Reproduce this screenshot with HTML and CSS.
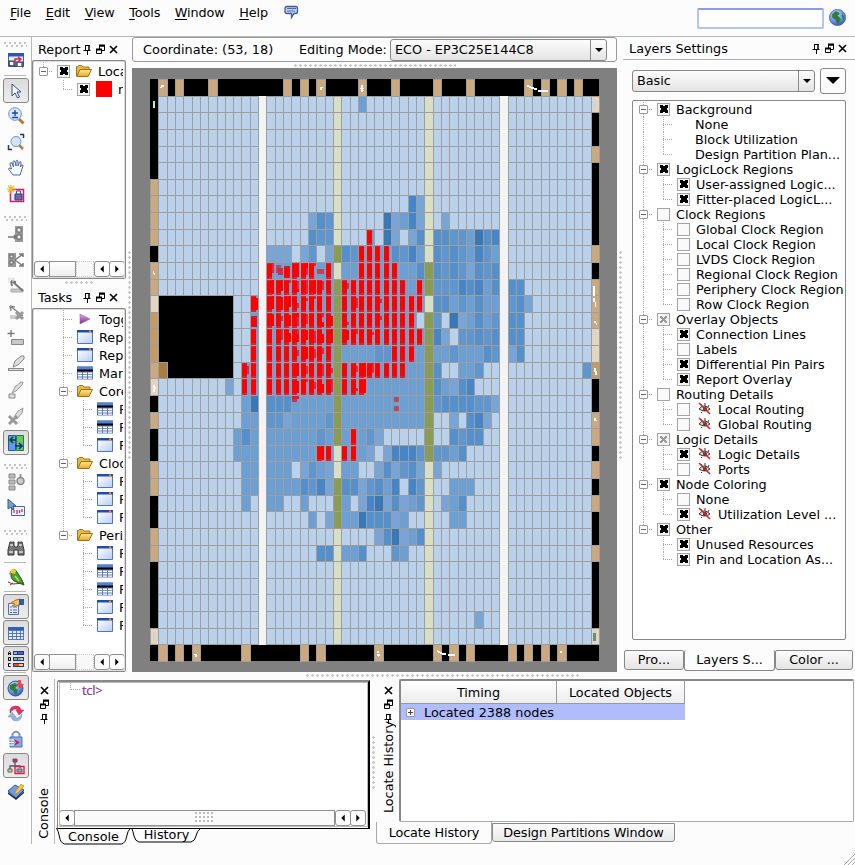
FILE: index.html
```html
<!DOCTYPE html>
<html lang="en">
<head>
<meta charset="utf-8">
<title>Chip Planner</title>
<link rel="stylesheet" href="styles.css">
</head>
<body>
<svg class="defs" width="0" height="0">
  <defs>
    <linearGradient id="gWin" x1="0" y1="0" x2="1" y2="1"><stop offset="0" stop-color="#fff"/><stop offset="1" stop-color="#b9cdf3"/></linearGradient>
    <linearGradient id="gFold" x1="0" y1="0" x2="0" y2="1"><stop offset="0" stop-color="#ffe896"/><stop offset="1" stop-color="#e8a828"/></linearGradient>
    <radialGradient id="gGlobe" cx=".4" cy=".3" r=".8"><stop offset="0" stop-color="#c4dcff"/><stop offset=".6" stop-color="#5f8fe0"/><stop offset="1" stop-color="#2347a0"/></radialGradient>
    <linearGradient id="gPurple" x1="0" y1="0" x2="0" y2="1"><stop offset="0" stop-color="#e0b0f0"/><stop offset="1" stop-color="#7a2090"/></linearGradient>
  </defs>
  <symbol id="pin" viewBox="0 0 11 11"><path d="M3.500 1v5.500M3 1.500h5M1.500 6.500h7M5.500 7v4" fill="none" stroke="#000"/><path d="M7 1v5.500" stroke="#000" stroke-width="1.500"/></symbol>
  <symbol id="float" viewBox="0 0 11 11"><path d="M4.500 5V2h5v4.500H7M1.500 5.500h5v4h-5z" fill="none" stroke="#000"/><path d="M4 1.500h6M1 5.500h6" stroke="#000" stroke-width="2"/></symbol>
  <symbol id="close" viewBox="0 0 11 11"><path d="M2 2l7 7M9 2L2 9" stroke="#000" stroke-width="1.600"/></symbol>
  <symbol id="folder" viewBox="0 0 16 14"><path d="M.5 12V2.500h1l1-1h3l1.500 1.500h6V5" fill="#e8b848" stroke="#a07818"/><path d="M.7 12.500L4 5.500h11.500L12 12.500z" fill="url(#gFold)" stroke="#a07010"/></symbol>
  <symbol id="window" viewBox="0 0 16 14"><path d="M.5 1.500h15v12H.5z" fill="url(#gWin)" stroke="#5078b8"/><path d="M0 0h16v2.500H0z" fill="#1c4cb0"/><path d="M12 .5h2V3h-2z" fill="#ff8a10"/></symbol>
  <symbol id="table" viewBox="0 0 16 13"><path d="M0 0h16v13H0z" fill="#5c7cb0"/><path d="M0 0h16v3H0z" fill="#5080e0"/><path d="M0 3h16v2H0z" fill="#000"/><path d="M1 6h4v1.700H1zM6 6h4v1.700H6zM11 6h4v1.700h-4zM1 8.500h4v1.500H1zM6 8.500h4v1.500H6zM11 8.500h4v1.500h-4zM1 11h4v1.300H1zM6 11h4v1.300H6zM11 11h4v1.300h-4z" fill="#fff"/></symbol>
  <symbol id="play" viewBox="0 0 16 14"><path d="M3 2l10 5-10 5z" fill="url(#gPurple)" stroke="#8a6a9a" stroke-width=".6"/></symbol>
  <symbol id="red" viewBox="0 0 16 16"><path d="M0 0h16v16H0z" fill="#f00"/></symbol>
  <symbol id="eye" viewBox="0 0 15 14"><path d="M2 7q5-6 11 0q-5 4-11 0M5 4L4 2M8 4V1M11 5l1-2M5 10l-1 1" fill="#ddd" stroke="#333"/><circle cx="8" cy="7" r="2" fill="#333"/><path d="M2 1l11 11" stroke="#e02020" stroke-width="1.600"/></symbol>
  <symbol id="globe" viewBox="0 0 16 16"><circle cx="8" cy="8" r="7.600" fill="url(#gGlobe)" stroke="#4a66b0" stroke-width=".8"/><path d="M3 5l3-3 3 1 1 2-2 1 2 2 1 2-2 4-2-1-1-3-3-2zM13 4l1 3v4l-1-2-1-3z" fill="#2e7d3c"/></symbol>
  <symbol id="left" viewBox="0 0 15 16"><path d="M9.500 4v8l-4-4z"/></symbol>
  <symbol id="right" viewBox="0 0 15 16"><path d="M5.500 4v8l4-4z"/></symbol>
  <symbol id="chat" viewBox="0 0 16 16"><path d="M4 2.500h9q1.500 0 1.500 2v3q0 2-2 2h-1.500l-2.500 4V9.500H4q-2 0-2-2v-3q0-2 2-2z" fill="#c0d4f0" stroke="#3e5c94" stroke-width="1.300"/><path d="M4 4.500h9M4 7h8" stroke="#4a68a4"/></symbol>

  <symbol id="t-export" viewBox="0 0 18 18"><path d="M1.500 1.500h15v13h-15z" fill="#e4edfb" stroke="#3b62b4"/><path d="M1 1h16v3.500H1z" fill="#2b58b8"/><path d="M2 9h6v5H2zM9 10h7v5H9z" fill="#7884a0" stroke="#333c60"/><path d="M3 10h3v3H3zM11 11h3v3h-3zM8 15h7v2H8z" fill="#fff"/><path d="M8 10V7h5M11 5l3 2-3 3" fill="none" stroke="#e0204c" stroke-width="1.500"/></symbol>
  <symbol id="t-arrow" viewBox="0 0 18 18"><path d="M5 2v12l3-3 2.500 5 2-1-2.500-5h4z" fill="#f1f6ff" stroke="#34507c"/></symbol>
  <symbol id="t-zoom" viewBox="0 0 18 18"><path d="M12 12l4.500 4.500" stroke="#b87830" stroke-width="3"/><circle cx="8" cy="7" r="6.300" fill="#d7e9ff" stroke="#6b92c8"/><path d="M5 6h6M8 3v6M5 10.500h6" stroke="#2144a8" stroke-width="1.400"/></symbol>
  <symbol id="t-fit" viewBox="0 0 18 18"><path d="M12 12l4 4" stroke="#b87830" stroke-width="2.500"/><circle cx="9" cy="8.500" r="5" fill="#cfe5fc" stroke="#6b92c8"/><path d="M13 1.500h3.500V5M1.500 12v4.500H5" fill="none" stroke="#203a60" stroke-width="1.500"/></symbol>
  <symbol id="t-hand" viewBox="0 0 18 18"><path d="M6 16L1.500 10q0-2 3 0L3 5q0-2 2-1l1.500 4L6 2.500q1-1.500 2 0L9 7V2q1.500-1.500 2 0v5l1.500-4q2-1 1.500 1l-.5 4 1-2q2-.5 1.500 1L14 13l-1 3z" fill="#f4f8ff" stroke="#4e6ca4"/></symbol>
  <symbol id="t-region" viewBox="0 0 18 18"><path d="M3.500 4.500h13v12h-13z" fill="#eef" stroke="#d02060" stroke-width="1.500"/><path d="M8 9h7v6H8z" fill="#5878c0" stroke="#203878"/><path d="M9.500 9V6h4v3" fill="none" stroke="#3858a0"/><path d="M9 12h5" stroke="#e03050"/><path d="M4 0v9M0 4h9M1 1l6 6M7 1L1 7" stroke="#f0b820" stroke-width="1.200"/></symbol>
  <symbol id="t-in" viewBox="0 0 18 18"><path d="M8 1h8v16H8z" fill="#999"/><path d="M10 3h4v4h-4zM10 10h4v4h-4z" fill="#eee" stroke="#666"/><path d="M1 12h8M7 10l2 2-2 2" stroke="#777" fill="none" stroke-width="1.500"/></symbol>
  <symbol id="t-out" viewBox="0 0 18 18"><path d="M1 2h8v14H1z" fill="#999"/><path d="M3 4h3v3H3zM3 10h3v3H3z" fill="#eee" stroke="#666"/><path d="M8 9l8-6M8 9l8 6M12 3h4v3M12 15h4v-3" stroke="#777" fill="none" stroke-width="1.500"/></symbol>
  <symbol id="t-fan" viewBox="0 0 18 18"><path d="M4 12h12v3H4z" fill="#c8c8c8" stroke="#aaa"/><path d="M5 4l11 10M4 4l5 1M4 4l1 5" stroke="#777" stroke-width="1.800"/><path d="M1 2h7M2 0v6M6 0v5" stroke="#ddd"/></symbol>
  <symbol id="t-del" viewBox="0 0 18 18"><path d="M3 12h12v4H3z" fill="#ccc"/><path d="M3 3l13 10M3 3l5 1M3 3l1 5" stroke="#888" stroke-width="1.500"/><path d="M9 9l7 7M16 9l-7 7" stroke="#999" stroke-width="3"/></symbol>
  <symbol id="t-add" viewBox="0 0 18 18"><path d="M4 1v7M.5 4.500h7" stroke="#777" stroke-width="1.300"/><path d="M4.500 10.500h12v5h-12z" fill="#c8c8c8" stroke="#888"/></symbol>
  <symbol id="t-pen1" viewBox="0 0 18 18"><path d="M1 14.500h16" stroke="#888" stroke-width="3"/><path d="M2 14.500h14" stroke="#ddd"/><path d="M6 12l2-6 6-5h3v3l-6 6z" fill="#ddd" stroke="#888"/></symbol>
  <symbol id="t-pen2" viewBox="0 0 18 18"><path d="M2 13h6v4H2z" fill="#ddd" stroke="#888"/><path d="M5 12l3-6 6-5h2l-1 3-6 6z" fill="#ddd" stroke="#999"/></symbol>
  <symbol id="t-pen3" viewBox="0 0 18 18"><path d="M7 10l4-6 5-3-1 5-5 6z" fill="#ddd" stroke="#999"/><path d="M2 9l8 8M10 9l-8 8" stroke="#999" stroke-width="3"/></symbol>
  <symbol id="t-swap" viewBox="0 0 18 18"><path d="M1.500 1.500h7v15h-7z" fill="#5e9be8" stroke="#2656a8"/><path d="M9.500 1.500h7v15h-7z" fill="#6bc465" stroke="#2a7a3a"/><path d="M3 6h6M6 3L3 6l3 3" fill="none" stroke="#0a4a1a" stroke-width="1.700"/><path d="M8 12h7M12 9l3 3-3 3" fill="none" stroke="#122a90" stroke-width="1.700"/></symbol>
  <symbol id="t-nodes" viewBox="0 0 18 18"><path d="M2 1h6v4H2zM2 7h6v4H2zM2 13h6v4H2z" fill="#bbb" stroke="#888"/><path d="M13.500 4v-3" stroke="#999" stroke-width="2"/><circle cx="13.500" cy="8" r="3.500" fill="#ccc" stroke="#888" stroke-width="1.500"/></symbol>
  <symbol id="t-chart" viewBox="0 0 18 18"><path d="M4.500 7.500h13v9h-13z" fill="#eef4ff" stroke="#4868b0"/><path d="M7 14v-3M10 15v-4M12.500 14v-3M15 13v-3" stroke="#e02858" stroke-width="1.300"/><path d="M1 0v10l3-2 2 3 1-1-1-3h3z" fill="#7a9ed0" stroke="#34588c"/></symbol>
  <symbol id="t-bino" viewBox="0 0 18 18"><path d="M3 3h4v4l1 1h2l1-1V3h4l2 8v5h-6v-5H7v5H1v-5z" fill="#777" stroke="#333"/><path d="M4 2h2M12 2h2M3 6h3M12 6h3M2 13h4M12 13h4" stroke="#ddd" stroke-width="1.500"/></symbol>
  <symbol id="t-bird" viewBox="0 0 18 18"><path d="M4 3q3-4 6 1l5 8 2 5-5-2-5-2q-4-3-3-7z" fill="#48a038" stroke="#205c20"/><path d="M4 2q3-3 5 1l-1 3-4-1z" fill="#f4c830"/><path d="M3 4l-1 2 2 1z" fill="#e06020"/><path d="M8 8l4 5" stroke="#bce050" stroke-width="1.500"/><path d="M1 14l5 2 11-1M3 17l3-2" stroke="#684020" fill="none"/></symbol>
  <symbol id="t-prop" viewBox="0 0 18 18"><path d="M1.500 5.500h10v11h-10z" fill="#e8f0ff" stroke="#4a70b8"/><path d="M3 9h2M3 12h2M3 14.500h2M6 9h4M6 12h4M6 14.500h4" stroke="#3c64b0"/><path d="M4 5l5-3 4-1v6l-5 1H5l3-2z" fill="#f5c060" stroke="#b07018"/><path d="M12 1h5v6h-5z" fill="#2c58b0"/></symbol>
  <symbol id="t-grid" viewBox="0 0 18 18"><path d="M1 3h16v13H1z" fill="#5278b8"/><path d="M1 3h16v3H1z" fill="#3060b8"/><path d="M2 7h3v2H2zM6 7h3v2H6zM10 7h3v2h-3zM14 7h2v2h-2zM2 10h3v2H2zM6 10h3v2H6zM10 10h3v2h-3zM14 10h2v2h-2zM2 13h3v2H2zM6 13h3v2H6zM10 13h3v2h-3zM14 13h2v2h-2z" fill="#e8f0ff"/></symbol>
  <symbol id="t-abc" viewBox="0 0 18 18"><path d="M1.500 5V2.500l1-1 1 1V5M1.500 3.500h2M1.500 7.500v3h2v-3h-2M3.500 13.500h-2v3h2" stroke="#000" fill="none"/><path d="M6 1h11v4H6zM6 7h11v4H6zM6 13h11v4H6z" fill="#223a78"/><path d="M7 2h3v2H7z" fill="#8aaef8"/><path d="M11 2h5v2h-5z" fill="#4068d0"/><path d="M7 8h3v2H7z" fill="#70c850"/><path d="M11 8h3v2h-3z" fill="#c090f0"/><path d="M14 8h2v2h-2zM12 14h4v2h-4z" fill="#f0e050"/><path d="M7 14h5v2H7z" fill="#f04838"/></symbol>
  <symbol id="t-globe" viewBox="0 0 18 18"><circle cx="8.500" cy="9.500" r="7.500" fill="url(#gGlobe)" stroke="#3454a0"/><path d="M3 6l5-2 3 2-3 3 3 2-2 5-3-4-3-2z" fill="#2e7d3c"/><path d="M11 1h3v4h3l-4 5-4-5h2z" fill="#f04848"/></symbol>
  <symbol id="t-sync" viewBox="0 0 18 18"><path d="M3 9q-1-7 6-7 4 0 5 4h3l-5 5-3-5h2q-4-3-8 3z" fill="#e8305c" stroke="#b02848" stroke-width=".5"/><path d="M15 10q0 7-6 7-4 0-5-4H1l4-5 4 5H7q4 3 8-3z" fill="#9ab4dc" stroke="#7890b8" stroke-width=".5"/></symbol>
  <symbol id="t-lock" viewBox="0 0 18 18"><path d="M5.500 8V4q3.500-5 7 0v4" fill="none" stroke="#8098b8" stroke-width="2"/><path d="M3 7h12v10H3z" fill="#88aee0" stroke="#4870b0"/><path d="M1 10h6M2 12.500h5M1 15h6" stroke="#fff"/><path d="M7 9l6 3.500-6 3.500 2-3.500z" fill="#d81848"/></symbol>
  <symbol id="t-hier" viewBox="0 0 18 18"><path d="M8 5v4M3 12V9h10v2" fill="none" stroke="#405880" stroke-width="1.300"/><path d="M6 2h4v3H6z" fill="#e02848" stroke="#505870"/><path d="M1 12h4v3H1z" fill="#e8e050" stroke="#505870"/><path d="M10 12h5v3h-5z" fill="#78c0a0" stroke="#505870"/><path d="M8 9.500h9v7H8z" fill="none" stroke="#f01848" stroke-width="1.400"/></symbol>
  <symbol id="t-chip" viewBox="0 0 18 18"><path d="M1 9l7-6 9 5-8 8z" fill="#6f9ee0" stroke="#305090"/><path d="M1 10l8 6v2l-8-6zM9 16l8-7v2l-8 7z" fill="#203050"/><path d="M8 10l6-8 3 2-6 7-3 1z" fill="#f8c838" stroke="#b07018" stroke-width=".6"/></symbol>
</svg>

<header class="menubar">
  <nav class="menu">
    <span><u>F</u>ile</span><span><u>E</u>dit</span><span><u>V</u>iew</span><span><u>T</u>ools</span><span><u>W</u>indow</span><span><u>H</u>elp</span>
    <svg class="chat"><use href="#chat"/></svg>
  </nav>
  <div class="search"><input type="text" aria-label="Search"><svg class="globe"><use href="#globe"/></svg></div>
</header>

<div class="workspace">
  <aside class="toolbar" id="toolbar"></aside>
  <div class="body">
    <div class="upper">
      <div class="docks">
        <section class="dock report">
          <div class="title"><span>Report</span><svg><use href="#pin"/></svg><svg><use href="#float"/></svg><svg><use href="#close"/></svg></div>
          <div class="frame"><div class="tree" id="report"></div>
            <div class="scroll"><b><svg><use href="#left"/></svg></b><i></i><em></em><b><svg><use href="#left"/></svg></b><b><svg><use href="#right"/></svg></b></div>
          </div>
        </section>
        <div class="hsplit"><i></i></div>
        <section class="dock tasks">
          <div class="title"><span>Tasks</span><svg><use href="#pin"/></svg><svg><use href="#float"/></svg><svg><use href="#close"/></svg></div>
          <div class="frame"><div class="tree" id="tasks"></div>
            <div class="scroll"><b><svg><use href="#left"/></svg></b><i></i><em></em><b><svg><use href="#left"/></svg></b><b><svg><use href="#right"/></svg></b></div>
          </div>
        </section>
      </div>
      <div class="vsplit"><i></i></div>
      <main class="center">
        <div class="coords"><span class="coord">Coordinate: (53, 18)</span><span class="mode">Editing Mode:</span>
          <div class="combo"><span>ECO - EP3C25E144C8</span><b></b></div></div>
        <div class="hsplit wide"><i></i></div>
        <svg class="chip" id="chip" width="485" height="604" viewBox="132 68 485 604" shape-rendering="crispEdges"></svg>
      </main>
      <div class="vsplit"><i></i></div>
      <section class="layers">
        <div class="title"><span>Layers Settings</span><svg><use href="#pin"/></svg><svg><use href="#float"/></svg><svg><use href="#close"/></svg></div>
        <div class="preset"><div class="combo"><span>Basic</span><b></b></div><button class="drop" aria-label="Options"></button></div>
        <div class="ltree" id="layers"></div>
        <div class="ltabs"><span>Pro...</span><span class="on">Layers S...</span><span>Color ...</span></div>
      </section>
    </div>
    <div class="hsplit mid"><i></i></div>
    <div class="lower">
      <div class="side"><svg><use href="#close"/></svg><svg><use href="#float"/></svg><svg><use href="#pin"/></svg><span>Console</span></div>
      <section class="console">
        <div class="term"><div class="prompt"><i></i>tcl&gt;</div>
          <div class="scroll"><b><svg><use href="#left"/></svg></b><i class="grip"></i><b><svg><use href="#left"/></svg></b><b><svg><use href="#right"/></svg></b></div></div>
        <div class="ctabs"><span>Console<svg viewBox="0 0 75 17"><path d="M.5 0q2 3 3 9t5 7h57q4-1 5-7t4-9"/></svg></span><span class="off">History<svg viewBox="0 0 71 15"><path d="M.5 .5h69M1 1q1 2 2 7t5 6h52q4-1 5-6t4-7"/></svg></span></div>
      </section>
      <div class="vsplit low"><i></i></div>
      <section class="locate">
        <div class="row">
          <div class="side"><svg><use href="#close"/></svg><svg><use href="#float"/></svg><svg><use href="#pin"/></svg><span>Locate History</span></div>
          <div class="table">
            <div class="th"><span>Timing</span><span>Located Objects</span></div>
            <div class="td"><i class="box plus"></i><span>Located 2388 nodes</span></div>
          </div>
        </div>
        <div class="dtabs"><span class="on">Locate History</span><span>Design Partitions Window</span></div>
      </section>
    </div>
  </div>
</div>
<svg class="sizegrip" width="12" height="12"><path d="M1 12L12 1M5 12l7-7M9 12l3-3" stroke="#aaa"/></svg>
<script src="app.js"></script>
</body>
</html>
```
FILE: styles.css
```css
* { box-sizing: border-box; }
body { margin: 0; width: 855px; height: 865px; overflow: hidden; background: #fcfcfc; color: #000; font: 12.8px/15px "DejaVu Sans", sans-serif; display: flex; flex-direction: column; white-space: nowrap; }
.defs { position: absolute; }
svg { display: block; flex: none; }
.menubar { height: 37px; flex: none; display: flex; justify-content: space-between; border-bottom: 1px solid #b8b8b8; }
.menu { display: flex; gap: 14.6px; padding: 5px 0 0 10px; height: 22px; letter-spacing: -.1px; }
.menu u { text-underline-offset: 2px; }
.chat { width: 16px; height: 16px; margin-top: -1px; }
.search { display: flex; gap: 5px; padding: 8px 9px 0 0; }
.search input { width: 127px; height: 21px; border: 2px solid #b4c4f8; border-top-color: #8c9ce0; border-radius: 2px; background: #fff; padding: 0; outline: 0; }
.globe { width: 17px; height: 17px; margin-top: 1px; }
.workspace { flex: 1; display: flex; min-height: 0; }
.toolbar { width: 32px; flex: none; height: 807px; border-right: 1px solid #b8b8b8; display: flex; flex-direction: column; }
.toolbar .btn { width: 26px; height: 26px; margin-left: 3px; padding: 4px; flex: none; }
.toolbar .btn svg { width: 18px; height: 18px; }
.toolbar .btn.on { height: 25px; margin: 1px 0 0 3px; padding: 3px 3px; border: 1px solid #888; border-radius: 3px; background: linear-gradient(#dcdcdc, #ececec); }
.toolbar .sep { height: 2px; margin: 0 5px 1px 4px; border-bottom: 1px solid #b8b8b8; flex: none; }
.toolbar .handle { height: 14px; padding: 9px 4px 0; flex: none; }
.toolbar .handle.first { height: 11px; padding-top: 5px; }
.toolbar .handle::before { content: ""; display: block; height: 5px; width: 23px; background: radial-gradient(circle at 1px 1px, #c4c4c4 1px, transparent 1.4px) 0 0/5px 5px, radial-gradient(circle at 3px 4px, #c4c4c4 1px, transparent 1.4px) 0 0/5px 5px; }
.body { flex: 1; min-width: 0; display: flex; flex-direction: column; }
.upper { display: flex; height: 635px; flex: none; }
.docks { width: 94px; display: flex; flex-direction: column; }
.title { height: 23px; display: flex; align-items: center; padding: 1px 0 0 6px; }
.title span { flex: 1; }
.title svg { width: 11px; height: 11px; margin-right: 2px; }
.docks .title { padding-right: 5px; }
.frame { border: 1px solid #888; border-width: 2px 1px 1px; border-radius: 2px; background: #fff; display: flex; flex-direction: column; justify-content: space-between; outline: 1px solid #ddd; outline-offset: -2px; }
.report .frame { height: 219px; }
.tasks .frame { height: 364px; }
.hsplit { height: 7px; display: flex; align-items: center; justify-content: center; }
.hsplit i, .vsplit i { background: radial-gradient(circle at 1.500px 1.500px, #c8c8c8 1px, transparent 1.500px) 0 0/5px 5px; }
.hsplit i { width: 28px; height: 3px; }
.hsplit.wide { height: 6px; }
.hsplit.wide i { width: 162px; }
.hsplit.mid { height: 7px; flex: none; }
.hsplit.mid i { width: 275px; }
.vsplit { width: 6px; display: flex; align-items: center; justify-content: center; flex: none; }
.vsplit i { width: 3px; height: 208px; }
.vsplit.low i { height: 53px; }
.tree { overflow: hidden; width: 90px; padding-left: 1px; }
.node { display: flex; height: 18px; align-items: center; }
.node svg { width: 16px; height: 14px; margin: 0 6px 0 3px; }
.node svg.lg { height: 16px; }
.cell { width: 20px; height: 100%; flex: none; display: flex; align-items: center; padding-left: 5px; background: no-repeat; }
.v { background: repeating-linear-gradient(#aaa 0 1px, transparent 1px 2px) 9px 0/1px 100% no-repeat; }
.tee { background: repeating-linear-gradient(#aaa 0 1px, transparent 1px 2px) 9px 0/1px 100% no-repeat, repeating-linear-gradient(90deg, #aaa 0 1px, transparent 1px 2px) 9px 50%/10px 1px no-repeat; }
.end { background: repeating-linear-gradient(#aaa 0 1px, transparent 1px 2px) 9px 0/1px 50% no-repeat, repeating-linear-gradient(90deg, #aaa 0 1px, transparent 1px 2px) 9px 50%/10px 1px no-repeat; }
.box { width: 9px; height: 9px; border: 1px solid #999; border-radius: 1px; background: linear-gradient(#666, #666) center/5px 1px no-repeat #fff; flex: none; }
.plus { background: linear-gradient(#444, #444) center/5px 1px no-repeat, linear-gradient(#444, #444) center/1px 5px no-repeat #fff; }
.check { width: 13px; height: 13px; border: 1px solid #a4a4a4; background: #fafafa; margin: 0 6px 0 3px; flex: none; }
.check.x { background: linear-gradient(45deg, transparent 34%, #000 36% 64%, transparent 66%) center/8px 8px no-repeat, linear-gradient(-45deg, transparent 34%, #000 36% 64%, transparent 66%) center/8px 8px no-repeat #f4f4f4; }
.check.p { background: linear-gradient(45deg, transparent 36%, #999 38% 62%, transparent 64%) center/7px 7px no-repeat, linear-gradient(-45deg, transparent 36%, #999 38% 62%, transparent 64%) center/7px 7px no-repeat #f4f4f4; }
.tree .check { margin-right: 3px; }
.scroll { display: flex; height: 16px; margin: 0 0 1px 1px; }
.scroll b { width: 16px; border: 1px solid #909090; border-radius: 3px; background: #fcfcfc; margin-right: -1px; flex: none; }
.scroll b svg { width: 14px; height: 14px; }
.scroll i { width: 27px; border: 1px solid #909090; background: linear-gradient(#fff, #eee); }
.scroll em { width: 18px; border: 1px dotted #ccc; background: #f8f8f8; }
.center { width: 485px; }
.coords { height: 25px; border: 1px solid #999; border-radius: 3px; display: flex; align-items: center; padding-left: 10px; }
.coord { width: 156px; font-size: 12.9px; }
.mode { width: 91px; }
.combo { width: 217px; height: 22px; border: 1px solid #888; border-radius: 3px; background: linear-gradient(#fcfcfc, #e4e4e4); display: flex; align-items: center; padding-left: 4px; }
.combo span { flex: 1; }
.combo b { width: 16px; height: 100%; border-left: 1px solid #888; display: flex; align-items: center; justify-content: center; }
.combo b::before { content: ""; border: 4px solid transparent; border-top-color: #000; border-bottom: 0; }
.layers { width: 232px; display: flex; flex-direction: column; }
.layers .title { border-bottom: 1px solid #b0b0b0; padding-right: 5px; }
.preset { display: flex; gap: 5px; padding: 8px 0 0 9px; align-items: center; }
.preset .combo { width: 183px; }
.drop { width: 26px; height: 26px; border: 1px solid #888; border-radius: 3px; background: #fbfbfb; padding: 0; display: flex; align-items: center; justify-content: center; }
.drop::before { content: ""; border: 7px solid transparent; border-top-color: #000; border-bottom: 0; }
.ltree { margin: 6px 0 0 9px; width: 214px; height: 541px; border: 1px solid #888; border-radius: 2px; background: #fff; padding: 1px 0 0 1px; }
.ltree .node { height: 15px; }
.ltree .node svg { width: 15px; height: 14px; margin: 0 6px 0 1px; }
.ltree .nocheck { width: 21px; flex: none; }
.ltabs { display: flex; height: 22px; margin-top: 10px; align-items: flex-start; }
.ltabs span { height: 20px; border: 1px solid #888; border-radius: 2px 2px 3px 3px; background: linear-gradient(#fcfcfc, #e4e4e4); text-align: center; line-height: 18px; width: 78px; }
.ltabs span:first-child { width: 60px; margin-left: 1px; }
.ltabs .on { width: 91px; height: 21px; border-top: 0; background: #fcfcfc; line-height: 20px; }
.lower { display: flex; height: 166px; }
.side { width: 23px; display: flex; flex-direction: column; align-items: center; padding: 6px 0 5px 2px; gap: 3px; }
.side svg { width: 11px; height: 11px; }
.side span { writing-mode: vertical-rl; transform: rotate(180deg); margin-top: auto; line-height: 16px; }
.lower > .side { border-right: 1px solid #b8b8b8; height: 165px; }
.console { width: 315px; padding: 0 0 0 1px; }
.term { margin-left: 1px; height: 149px; border: 2px solid #888; border-width: 2px 2px 1px 1px; border-right-color: #000; border-bottom-color: #000; border-radius: 2px 0 0; background: #fff; display: flex; flex-direction: column; justify-content: space-between; margin-top: 1px; outline: 1px solid #bbb; outline-offset: -3px; }
.prompt { display: flex; color: #813a96; font: 13px/16px "Open Sans", sans-serif; padding-left: 12px; letter-spacing: -.3px; -webkit-text-stroke: .2px #813a96; }
.prompt i { width: 10px; height: 8px; border: 1px dotted #aaa; border-width: 0 0 1px 1px; margin-right: 2px; }
.term .scroll { margin: 0 3px 2px 1px; }
.term .scroll .grip { flex: 1; background: #fafafa; display: flex; align-items: center; justify-content: center; }
.grip::before { content: ""; width: 20px; height: 12px; background: radial-gradient(circle at 1px 1px, #bbb 1px, transparent 1.400px) 0 0/4px 4px; }
.ctabs { display: flex; }
.ctabs span { width: 75px; height: 17px; display: grid; justify-items: center; line-height: 17px; margin-top: -1px; }
.ctabs svg { width: 75px; height: 17px; margin-top: -17px; fill: none; stroke: #000; }
.ctabs .off, .ctabs .off svg { width: 71px; height: 15px; line-height: 14px; }
.ctabs .off svg { margin-top: -14px; }
.locate { width: 478px; }
.locate .row { display: flex; height: 143px; }
.locate .side { padding-bottom: 9px; }
.locate .side span { margin-top: -6px; }
.table { width: 455px; border: 2px solid #888; border-right: 1px solid #aaa; border-bottom: 1px solid #aaa; border-radius: 2px; background: #fff; }
.th { display: flex; }
.th span { width: 156px; height: 23px; border: 1px solid #999; border-width: 0 1px 1px 0; text-align: center; line-height: 23px; background: linear-gradient(#fff, #ececec); }
.th span + span { width: 128px; }
.td { display: flex; align-items: center; width: 284px; height: 16px; background: #b0bdfd; padding-left: 5px; gap: 9px; }
.dtabs { display: flex; }
.dtabs span { height: 19px; margin-top: 1px; border: 1px solid #888; border-radius: 0 0 3px 3px; width: 183px; text-align: center; line-height: 17px; letter-spacing: -.1px; background: linear-gradient(#fcfcfc, #e8e8e8); }
.dtabs .on { width: 116px; height: 22px; margin: 0; border-top: 0; border-color: #aaa; background: #fcfcfc; line-height: 21px; }
.sizegrip { position: absolute; left: 843px; top: 853px; }
```
FILE: app.js
```js
// Toolbar: "-" separator, "=" drag handle, "!" marks a pressed button.
document.getElementById('toolbar').innerHTML =
  '== export - !arrow zoom fit hand region = in out fan del add pen1 pen2 pen3 !swap = nodes chart = bino - bird - !prop !grid !abc - !globe sync lock !hier chip'
    .split(' ').map(t =>
      t === '==' ? '<div class="handle first"></div>' :
      t === '=' ? '<div class="handle"></div>' :
      t === '-' ? '<div class="sep"></div>' :
      `<div class="btn${t[0] === '!' ? ' on' : ''}"><svg><use href="#t-${t.replace('!', '')}"/></svg></div>`).join('');

// Tree rows: branch cells, checkbox state, icon, label.
// Branch cells: m/l expander, v line, t tee, e last child.
const cls = { ' ': '', m: 'tee', v: 'v', t: 'tee', e: 'end', l: 'end' };
const cells = s => [...s].map(k => `<span class="cell ${cls[k]}">${k === 'm' || k === 'l' ? '<i class="box"></i>' : ''}</span>`).join('');
const icon = n => n ? `<svg class="${n === 'red' ? 'lg' : ''}"><use href="#${n}"/></svg>` : '';
const check = c => c === '' ? '' : c === 'n' ? '<i class="nocheck"></i>' : `<i class="check ${c}"></i>`;
const fill = (id, rows) => document.getElementById(id).innerHTML =
  rows.map(([s, c, i, t]) => `<div class="node">${cells(s)}${check(c)}${icon(i)}<span>${t}</span></div>`).join('');

fill('report', [['l', 'x', 'folder', 'Loca'], [' e', 'x', 'red', 'r']]);
fill('tasks', [
  [' t', '', 'play', 'Togg'], [' t', '', 'window', 'Rep'], [' t', '', 'window', 'Rep'], [' t', '', 'table', 'Mar'],
  [' m', '', 'folder', 'Core'], [' vt', '', 'table', 'R'], [' vt', '', 'table', 'R'], [' ve', '', 'window', 'R'],
  [' m', '', 'folder', 'Cloc'], [' vt', '', 'window', 'R'], [' vt', '', 'window', 'R'], [' ve', '', 'window', 'R'],
  [' l', '', 'folder', 'Peri'], ['  t', '', 'window', 'R'], ['  t', '', 'table', 'R'], ['  t', '', 'table', 'R'],
  ['  t', '', 'window', 'R'], ['  e', '', 'window', 'R']]);
fill('layers', [
  ['m', 'x', '', 'Background'], ['vt', 'n', '', 'None'], ['vt', 'n', '', 'Block Utilization'], ['ve', 'n', '', 'Design Partition Plan...'],
  ['m', 'x', '', 'LogicLock Regions'], ['vt', 'x', '', 'User-assigned Logic...'], ['ve', 'x', '', 'Fitter-placed LogicL...'],
  ['m', 'o', '', 'Clock Regions'], ['vt', 'o', '', 'Global Clock Region'], ['vt', 'o', '', 'Local Clock Region'], ['vt', 'o', '', 'LVDS Clock Region'],
  ['vt', 'o', '', 'Regional Clock Region'], ['vt', 'o', '', 'Periphery Clock Region'], ['ve', 'o', '', 'Row Clock Region'],
  ['m', 'p', '', 'Overlay Objects'], ['vt', 'x', '', 'Connection Lines'], ['vt', 'o', '', 'Labels'], ['vt', 'x', '', 'Differential Pin Pairs'], ['ve', 'x', '', 'Report Overlay'],
  ['m', 'o', '', 'Routing Details'], ['vt', 'o', 'eye', 'Local Routing'], ['ve', 'o', 'eye', 'Global Routing'],
  ['m', 'p', '', 'Logic Details'], ['vt', 'x', 'eye', 'Logic Details'], ['ve', 'o', 'eye', 'Ports'],
  ['m', 'x', '', 'Node Coloring'], ['vt', 'o', '', 'None'], ['ve', 'x', 'eye', 'Utilization Level ...'],
  ['l', 'x', '', 'Other'], [' t', 'x', '', 'Unused Resources'], [' e', 'x', '', 'Pin and Location As...']]);

// Chip floorplan. Grid line positions, then utilization levels per row.
const X = [150,158,167,175,183,192,200,208,217,225,233,241,250,258,266,275,283,291,300,308,316,325,333,341,350,358,366,374,383,391,399,408,416,424,433,441,449,458,466,474,483,491,499,508,516,524,532,541,549,557,566,574,582,591,599];
const Y = [79,96,112,129,146,162,179,195,212,229,245,262,279,295,312,328,345,362,378,395,412,428,445,461,478,495,511,528,545,561,578,594,611,628,644,661];
const N = '............', O = '........', P = '..........';
// Segments: columns 1-12 | 14-21 | 23-32 | 34-41 | 43-52
const rows = {
  1: [N, O, '..b.......', O, P],
  7: [N, O, '........ea', O, P],
  8: [N, '.....adc', '.....fabea', '.a......', P],
  9: [N, '.....dcc', '...R.fa.ad', 'ddccbfde', P],
  10: [N, 'aaa.ac.a', 'dcRRRRdceb', 'dcdcbecb', P],
  11: [N, 'RsrRRRuR', 'bbRRRRRbbd', 'dcdcadcd', P],
  12: [N, 'RRRRRRRR', 'RRRRRRRRbR', 'cccedebd', 'dd........'],
  13: ['...........R', 'RRRRRRRR', 'RRRRRRRRRR', 'ddbcbdbb', 'cda.......'],
  14: ['...........r', 'RRRRRRRR', 'RRRRRRRRR.', 'c.fabdbc', 'dd........'],
  15: ['...........R', 'RRRRRRRR', 'RRRRRRRRRR', 'ea.ccdcd', 'dd........'],
  16: ['...........R', 'RRRRRRRR', 'bbbbccRRRb', 'bbcbbbdc', 'ad........'],
  17: ['..........RR', 'RRRRRRRR', 'RRRRRRRRbb', 'd..bbc..', '.........c'],
  18: ['........a.RR', 'RRRRRRRR', 'RRRbbbbbbb', 'dbade...', P],
  19: ['..........bf', 'dddbbbbb', 'bbbbbbbbbb', 'cddddcca', P],
  20: ['..........bb', 'ccabbbbc', 'bbbbbbbbbb', '..a.dea.', P],
  21: ['.........bdb', 'bbbbbbcb', 'bRbca.....', '..dcdd..', P],
  22: ['.........bbb', 'bbbbbbRR', 'RRba.aeeec', 'ccbd....', P],
  23: ['..........bb', 'bbb.acba', 'bb..adacda', 'a.......', P],
  24: ['..........bb', 'bbbbdcea', 'ddacdbe.ec', '..bbb...', P],
  25: ['..........b.', 'bb..b...', 'b.aefadabc', '.abd....', P],
  26: [N, '.....b.a', 'bbfdddab..', '..bb....', P],
  27: [N, O, '....adfabd', O, P],
  28: [N, '......dd', 'bbd...cb..', O, P],
  32: [N, O, P, '.....a..', P]
};
const LV = { '.': '#bad1eb', a: '#78a5d7', b: '#6c9fd3', c: '#6096d0', d: '#5490cc', e: '#4585c8', f: '#3678b8' };
const out = [];
const rect = (x, y, w, h, f) => out.push(`<rect x="${x}" y="${y}" width="${w}" height="${h}" fill="${f}"/>`);
rect(132, 68, 485, 604, '#808080');
rect(150, 79, 449, 582, '#000');
rect(158, 96, 434, 549, '#9e9e9e');
const reds = [];
const starts = [1, 14, 23, 34, 43];
for (let r = 1; r < 34; r++) {
  const segs = rows[r] || [N, O, P, O, P];
  segs.forEach((s, k) => [...s].forEach((ch, j) => {
    const c = starts[k] + j;
    rect(X[c] + 1, Y[r] + 1, X[c + 1] - X[c] - 1, Y[r + 1] - Y[r] - 1, LV[ch] || LV.b);
    if (!LV[ch]) reds.push([c, r, ch]);
  }));
  const h = Y[r + 1] - Y[r] - 1;
  const dark22 = r === 10 || (r > 11 && r < 22) || (r > 23 && r < 27);
  const dark33 = r === 11 || r === 12 || (r > 13 && r < 23);
  rect(334, Y[r] + 1, 7, h, dark22 ? '#8a9c54' : '#d9dfc4');
  rect(425, Y[r] + 1, 8, h, dark33 ? '#8a9c54' : '#d9dfc4');
}
rect(259, 96, 7, 549, '#f3f3f3');
rect(500, 96, 8, 549, '#f3f3f3');
// Partially filled blocks: extra strip beside the main bar, as [column, row, top offset, height, colour]
const D = '#c83050', F = '#f00';
const extra = [
  [14,11,1,10,D],[17,11,1,14,F],[18,11,1,5,F],[18,11,6,7,D],[19,11,1,3,D],
  [14,12,1,14,F],[15,12,1,11,F],[16,12,1,3,D],[17,12,2,8,D],[17,12,10,3,F],[18,12,1,14,D],[19,12,1,14,F],[20,12,2,9,D],[23,12,4,6,D],
  [12,13,3,12,F],[14,13,1,13,F],[15,13,2,13,F],[16,13,1,11,F],[17,13,8,5,D],[18,13,3,3,D],[19,13,1,3,D],[24,13,3,10,D],[27,13,4,4,D],
  [14,14,2,12,F],[15,14,4,5,D],[16,14,3,11,F],[17,14,1,4,F],[17,14,5,9,D],[18,14,2,10,D],[20,14,1,4,D],[20,14,10,5,F],[21,14,4,10,F],[23,14,10,3,D],[27,14,4,4,D],
  [15,15,1,11,D],[16,15,5,9,F],[17,15,1,5,D],[17,15,6,8,F],[18,15,2,10,F],[19,15,3,12,D],[20,15,6,9,F],[21,15,1,14,F],[23,15,2,10,F],[24,15,1,5,D],[26,15,4,3,D],
  [17,16,5,6,D],[18,16,2,12,F],[19,16,4,9,D],[20,16,3,6,D],
  [11,17,4,8,D],[17,17,1,13,F],[18,17,4,8,D],[20,17,2,12,D],[21,17,6,5,D],[24,17,4,6,D],[25,17,1,14,F],[26,17,1,10,D],
  [17,18,3,12,F],[18,18,1,3,D],[19,18,4,7,D],[20,18,6,9,F],[21,18,1,13,D],[25,18,1,14,F],[24,18,10,3,D],
  [20,22,1,14,F]
];
for (const [c, r, dy, h, f] of extra) rect(X[c] + 6, Y[r] + dy, 2, h, f);
for (const [c, r, ch] of reds) {
  const x = X[c] + 1, y = Y[r] + 1, h = Y[r + 1] - Y[r] - 1;
  if (ch === 's') { rect(x, y + 2, 5, 4, '#b84a68'); rect(x, y + 6, 2, 4, '#c83858'); rect(x + 2, y + 5, 5, 7, '#d02848'); continue; }
  if (ch === 'u') { rect(x, y + 6, 7, 5, '#c04060'); continue; }
  if (ch === 'r') { rect(x, y + 3, 6, h - 4, '#e01428'); rect(x, y + 5, 5, h - 7, F); continue; }
  rect(x, y, 5, h, '#d8203c');
  rect(x, y + 1, 5, h - 3, F);
}
rect(292, 396, 7, 3, '#e01830'); rect(292, 399, 5, 3, '#c03858');
rect(394, 397, 5, 5, '#b04c68'); rect(394, 406, 5, 5, '#b04c68');
rect(159, 296, 74, 82, '#000');
rect(158, 362, 10, 16, '#9e9e9e'); rect(159, 363, 8, 15, '#ab7d3e');

const io = (c, r, f) => {
  rect(X[c], Y[r], X[c + 1] - X[c] + 1, Y[r + 1] - Y[r] + 1, '#9e9e9e');
  rect(X[c] + 1, Y[r] + 1, X[c + 1] - X[c] - 1, Y[r + 1] - Y[r] - 1, f);
};
const TAN = '#cba87d', DK = '#c49a66', PALE = '#e5d5c0';
[1, 3, 7, 16, 18, 20, 25, 29, 34, 38, 45, 47, 49, 51].forEach(c => io(c, 0, TAN));
[1, 3, 5, 11, 18, 20, 27, 34, 36, 38, 43, 45, 47, 49].forEach(c => io(c, 34, TAN));
[6, 7, 8, 9, 11, 12, 17, 20, 23, 24, 27, 28].forEach(r => io(0, r, TAN));
[14, 15, 16].forEach(r => io(0, r, DK));
[13, 18, 33].forEach(r => io(0, r, PALE));
[4, 10, 12, 13, 14, 20, 21, 23, 25, 28].forEach(r => io(53, r, TAN));
io(53, 17, DK);
[1, 15, 16, 33].forEach(r => io(53, r, PALE));
// Pin pair connection marks
[[161,85,3,2],[160,87,2,1],[320,87,2,3],[322,87,1,1],[361,85,2,7],[360,88,4,1],[361,90,3,1],
 [527,85,2,2],[529,86,2,2],[531,87,3,2],[534,88,3,2],[538,90,10,2],
 [153,271,1,3],[154,273,1,2],[153,385,2,3],[154,387,2,2],[153,389,2,3],
 [593,286,2,10],[593,298,2,4],[595,302,1,5],[594,321,2,2],[596,323,1,2],[594,368,2,4],[595,371,2,4],[594,418,2,3],[595,420,2,1],
 [194,654,3,1],[195,655,2,2],[377,651,2,2],[377,654,3,2],[378,656,1,1],
 [437,650,1,2],[438,651,2,2],[440,652,2,2],[442,653,4,2],[448,654,7,2],[560,651,2,2]].forEach(m => rect(...m, '#fff'));
rect(153, 101, 2, 7, '#c8ded8'); rect(593, 101, 3, 7, '#c5d8d2'); rect(153, 633, 2, 8, '#c5d8d2'); rect(593, 633, 3, 8, '#5d9184');
document.getElementById('chip').innerHTML = out.join('');
```
